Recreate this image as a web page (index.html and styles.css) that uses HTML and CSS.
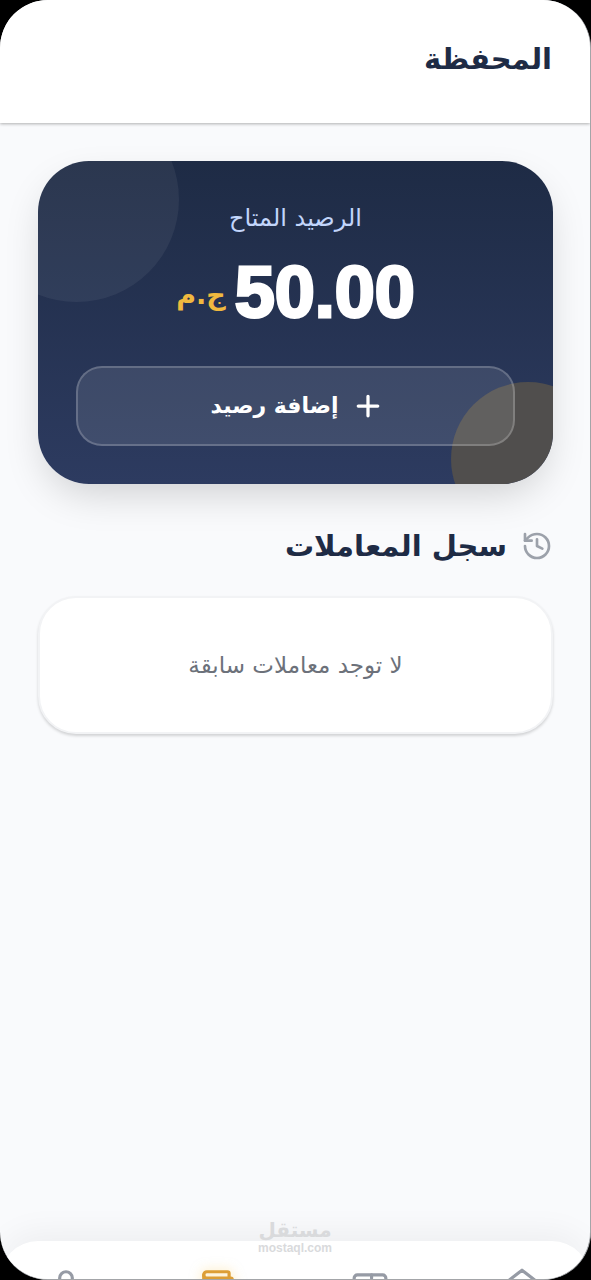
FILE: index.html
```html
<!DOCTYPE html>
<html lang="ar" dir="rtl">
<head>
<meta charset="utf-8">
<meta name="viewport" content="width=device-width, initial-scale=1">
<title>المحفظة</title>
<link rel="stylesheet" href="styles.css">
</head>
<body>
<div class="screen">
  <header class="topbar"><h1 class="topbar-title">المحفظة</h1></header>

  <main class="content">
    <section class="balance">
      <span class="blob blob-light"></span>
      <span class="blob blob-amber"></span>
      <p class="balance-label">الرصيد المتاح</p>
      <p class="balance-amount"><span class="amount">50.00</span><span class="currency">ج.م</span></p>
      <button class="add-button" type="button">
        <svg class="plus-icon" viewBox="0 0 24 24" aria-hidden="true"><path d="M3 12h18M12 3v18"/></svg>
        <span>إضافة رصيد</span>
      </button>
    </section>

    <section class="history">
      <h2 class="history-title">
        <svg class="history-icon" viewBox="0 0 24 24" aria-hidden="true"><path d="M3 12a9 9 0 1 0 9-9 9.75 9.75 0 0 0-6.74 2.74L3 8"/><path d="M3 3v5h5"/><path d="M12 7v5l4 2"/></svg>
        <span>سجل المعاملات</span>
      </h2>
      <p class="empty">لا توجد معاملات سابقة</p>
    </section>
  </main>

  <nav class="tabs">
    <a class="tab" href="#home" aria-label="الرئيسية"><svg viewBox="0 0 24 24"><path d="m3 9 9-7 9 7v11a2 2 0 0 1-2 2H5a2 2 0 0 1-2-2z"/><path d="M9 22V12h6v10"/></svg></a>
    <a class="tab" href="#tickets" aria-label="التذاكر"><svg viewBox="0 0 24 24"><path d="M2 9a3 3 0 0 1 0 6v2a2 2 0 0 0 2 2h16a2 2 0 0 0 2-2v-2a3 3 0 0 1 0-6V7a2 2 0 0 0-2-2H4a2 2 0 0 0-2 2Z"/><path d="M13 5v2M13 17v2M13 11v2"/></svg></a>
    <a class="tab tab-active" href="#wallet" aria-label="المحفظة"><svg viewBox="0 0 24 24"><path d="M19 7V4a1 1 0 0 0-1-1H5a2 2 0 0 0 0 4h15a1 1 0 0 1 1 1v4h-3a2 2 0 0 0 0 4h3a1 1 0 0 0 1-1v-2a1 1 0 0 0-1-1"/><path d="M3 5v14a2 2 0 0 0 2 2h15a1 1 0 0 0 1-1v-4"/></svg></a>
    <a class="tab" href="#profile" aria-label="حسابي"><svg viewBox="0 0 24 24"><circle cx="12" cy="7" r="4"/><path d="M19 21v-2a4 4 0 0 0-4-4H9a4 4 0 0 0-4 4v2"/></svg></a>
  </nav>

  <div class="watermark"><span class="watermark-name">مستقل</span><span class="watermark-site">mostaql.com</span></div>
</div>
</body>
</html>
```
FILE: styles.css
```css
* { box-sizing: border-box; }

body {
  margin: 0;
  background: #000;
  font-family: "DejaVu Sans", "Noto Sans", sans-serif;
  color: #1e2b45;
}

h1, h2, p { margin: 0; }

svg {
  fill: none;
  stroke: currentColor;
  stroke-width: 2;
  stroke-linecap: round;
  stroke-linejoin: round;
}

.screen {
  position: relative;
  display: flex;
  flex-direction: column;
  height: 100vh;
  overflow: hidden;
  background: #f9fafc;
  border: solid #a3a5a8;
  border-width: 0 1px 1px 0;
  border-radius: 48px;
}

.topbar {
  padding: 35px 38px 40px;
  background: #fff;
  box-shadow: 0 1px 3px rgba(0, 0, 0, 0.3);
}

.topbar-title {
  font-size: 29px;
  line-height: 48px;
}

.content {
  flex: 1;
  padding: 38px 37px 0 38px;
}

.balance {
  position: relative;
  overflow: hidden;
  padding: 38px;
  border-radius: 51px;
  background: linear-gradient(#1e2b45, #2d3b60);
  box-shadow: 0 16px 40px -8px rgba(0, 0, 0, 0.18);
  text-align: center;
}

.blob {
  position: absolute;
  border-radius: 50%;
}

.blob-light {
  top: -64px;
  left: -64px;
  width: 205px;
  height: 205px;
  background: rgba(255, 255, 255, 0.06);
}

.blob-amber {
  right: -52px;
  bottom: -52px;
  width: 154px;
  height: 154px;
  background: #504e4d;
}

.balance-label {
  position: relative;
  color: #c2d5fb;
  font-size: 24px;
  line-height: 38px;
}

.balance-amount {
  position: relative;
  display: flex;
  justify-content: center;
  align-items: center;
  gap: 9px;
  margin-bottom: 19px;
}

.amount {
  color: #fff;
  font-family: "Liberation Sans", sans-serif;
  font-size: 72px;
  font-weight: 900;
  line-height: 110px;
  -webkit-text-stroke: 3px #fff;
}

.currency {
  padding-top: 6px;
  color: #f0b93f;
  font-size: 27px;
  font-weight: 700;
  line-height: 38px;
}

.add-button {
  position: relative;
  display: flex;
  justify-content: center;
  align-items: center;
  gap: 16px;
  width: 100%;
  height: 80px;
  padding: 0;
  border: 2px solid rgba(255, 255, 255, 0.2);
  border-radius: 26px;
  background: rgba(255, 255, 255, 0.1);
  color: #fff;
  font: 700 22px/38px "DejaVu Sans", "Noto Sans", sans-serif;
}

.plus-icon {
  width: 26px;
  height: 26px;
  stroke-width: 3;
}

.history { margin-top: 38px; }

.history-title {
  display: flex;
  align-items: center;
  gap: 14px;
  font-size: 29px;
  line-height: 48px;
}

.history-icon {
  width: 32px;
  height: 32px;
  color: #9ca1aa;
}

.empty {
  margin-top: 26px;
  padding: 48px 24px;
  border: 2px solid #f2f3f5;
  border-radius: 38px;
  background: #fff;
  box-shadow: 0 2px 3px rgba(0, 0, 0, 0.16);
  color: #6c717a;
  font-size: 23px;
  line-height: 38px;
  text-align: center;
}

.tabs {
  display: flex;
  justify-content: space-between;
  height: 38px;
  padding: 26px 49px 0 47px;
  border-radius: 38px 38px 0 0;
  background: #fff;
  box-shadow: 0 -8px 32px rgba(0, 0, 0, 0.05);
}

.tab {
  height: 38px;
  color: #969ba5;
}

.tab svg {
  display: block;
  width: 38px;
  height: 38px;
}

.tab-active {
  color: #dd9e35;
  filter: drop-shadow(0 0 6px rgba(250, 200, 80, 0.5));
}

.watermark {
  position: absolute;
  right: 0;
  bottom: 25px;
  left: 0;
  display: flex;
  flex-direction: column;
  align-items: center;
  color: #d9dadc;
  font-weight: 700;
}

.watermark-name {
  font-size: 20px;
  line-height: 24px;
}

.watermark-site {
  font-family: "Liberation Sans", sans-serif;
  font-size: 12px;
  line-height: 12px;
}
```
